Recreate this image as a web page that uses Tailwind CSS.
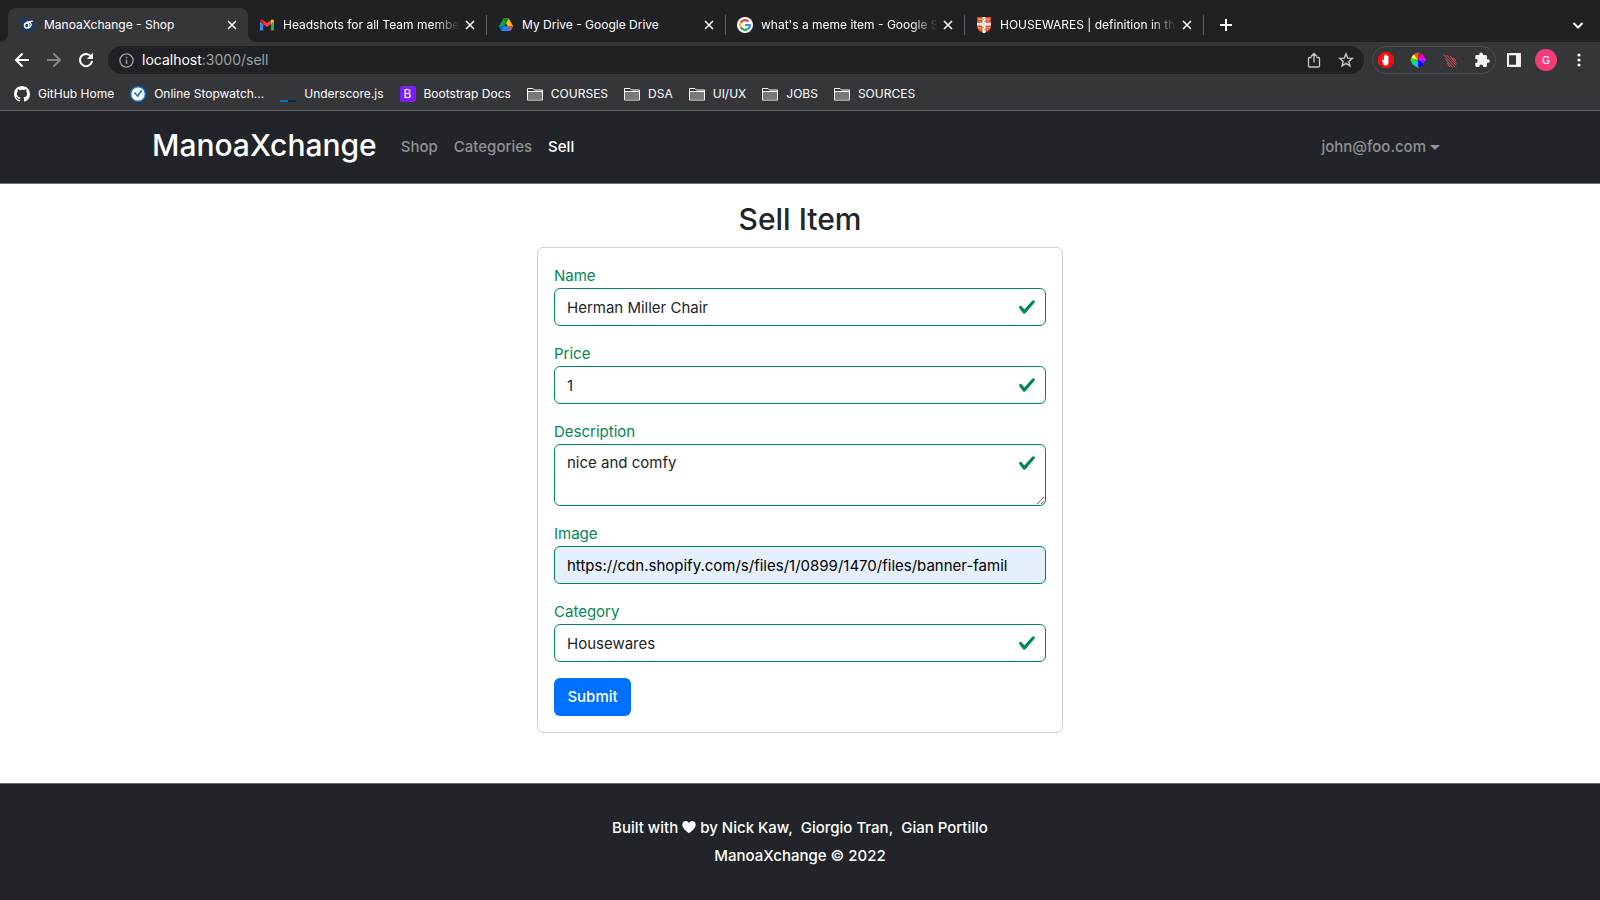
<!DOCTYPE html>
<html lang="en">
<head>
<meta charset="utf-8">
<meta name="viewport" content="width=device-width, initial-scale=1">
<title>ManoaXchange - Shop</title>
<script src="https://cdn.jsdelivr.net/npm/@tailwindcss/browser@4"></script>
</head>
<body class="flex min-h-screen flex-col bg-white font-['Inter','Liberation_Sans',sans-serif] text-[15px] leading-6 text-[#212529]">

<!-- Browser window -->
<div class="bg-[#35363a] text-xs text-white">
  <div class="flex h-[42px] items-end bg-[#202124] pr-4 pl-2" role="tablist">
    <div class="relative flex h-[34px] w-60 items-center rounded-t-lg bg-[#35363a] pr-[10px] pl-[14px]">
      <svg class="absolute bottom-0 -left-2 size-2" viewBox="0 0 8 8"><path fill="#35363a" d="M8 0v8H0a8 8 0 0 0 8-8z"/></svg>
      <svg class="absolute -right-2 bottom-0 size-2" viewBox="0 0 8 8"><path fill="#35363a" d="M0 0v8h8a8 8 0 0 1-8-8z"/></svg>
      <svg class="mr-[10px] size-3 shrink-0" viewBox="0 0 12 12"><path fill="#173a68" d="M0 0h12v12H0z"/><g fill="none" stroke="#fff"><ellipse cx="4.700" cy="6.500" rx="2.200" ry="2.400" stroke-width="1.500"/><path d="M4.500 3.200 10.800 2.200M7.500 3.500c1.800.2 2 2.200 1.300 3.500-.8 1.500-2 2-3.200 1.800" stroke-width="1.300"/></g></svg>
      <button role="tab" aria-selected="true" class="min-w-0 flex-1 overflow-hidden text-left whitespace-nowrap">ManoaXchange - Shop</button>
      <button aria-label="Close tab" class="ml-1 flex size-3 shrink-0 items-center justify-center"><svg class="size-3" viewBox="0 0 12 12" fill="none" stroke="#fff" stroke-width="1.500"><path d="m2 2 8 8m0-8-8 8"/></svg></button>
    </div>
    <div class="flex h-[34px] w-[238px] items-center pr-[10px] pl-[11px]">
      <svg class="mr-2 size-4 shrink-0" viewBox="0 0 16 16"><path fill="#4285f4" d="M1 5v7.500c0 .6.400 1 1 1h2.200V7z"/><path fill="#34a853" d="M15 5v7.500c0 .6-.4 1-1 1h-2.200V7z"/><path fill="#ea4335" d="M4.200 3.200v4L8 10l3.800-2.800v-4L8 6z"/><path fill="#c5221f" d="M1 4.600V5l3.200 2.300V3.200l-.6-.4C2.500 2 1 2.900 1 4.600z"/><path fill="#fbbc04" d="M15 4.600V5l-3.200 2.300V3.200l.6-.4C13.500 2 15 2.900 15 4.600z"/></svg>
      <button role="tab" class="min-w-0 flex-1 overflow-hidden mask-r-from-85% text-left whitespace-nowrap">Headshots for all Team member</button>
      <button aria-label="Close tab" class="ml-1 flex size-3 shrink-0 items-center justify-center"><svg class="size-3" viewBox="0 0 12 12" fill="none" stroke="#fff" stroke-width="1.500"><path d="m2 2 8 8m0-8-8 8"/></svg></button>
    </div>
    <div class="mb-[7px] h-5 w-px bg-[#5f6368]"></div>
    <div class="flex h-[34px] w-[238px] items-center pr-[10px] pl-[11px]">
      <svg class="mr-2 size-4 shrink-0" viewBox="0 0 16 16"><path fill="#0f9d58" d="M5.300 1.500 8 6.200 3.500 14 .8 9.300z"/><path fill="#ffba00" d="M5.300 1.500h5.400l4.500 7.800H9.800z"/><path fill="#2684fc" d="M5.900 9.300h9.300L12.500 14h-9z"/><path fill="#00832d" d="M5.300 1.500h5.400L8 6.200z"/><path fill="#0066da" d="M.8 9.300h5.100L3.500 14z"/><path fill="#ea4335" d="M9.800 9.300h5.400L12.500 14z"/></svg>
      <button role="tab" class="min-w-0 flex-1 overflow-hidden text-left whitespace-nowrap">My Drive - Google Drive</button>
      <button aria-label="Close tab" class="ml-1 flex size-3 shrink-0 items-center justify-center"><svg class="size-3" viewBox="0 0 12 12" fill="none" stroke="#fff" stroke-width="1.500"><path d="m2 2 8 8m0-8-8 8"/></svg></button>
    </div>
    <div class="mb-[7px] h-5 w-px bg-[#5f6368]"></div>
    <div class="flex h-[34px] w-[238px] items-center pr-[10px] pl-[11px]">
      <svg class="mr-2 size-4 shrink-0" viewBox="0 0 16 16"><circle cx="8" cy="8" r="8" fill="#fff"/><g fill="none" stroke-width="2.200"><path stroke="#ea4335" d="M3.800 5.600A4.900 4.900 0 0 1 11.500 4.600"/><path stroke="#fbbc05" d="M3.800 10.400a4.900 4.900 0 0 1 0-4.800"/><path stroke="#34a853" d="M3.800 10.400a4.900 4.900 0 0 0 7.300 1.400"/><path stroke="#4285f4" d="M8 8h4.900a4.900 4.900 0 0 1-1.800 3.800"/></g></svg>
      <button role="tab" class="min-w-0 flex-1 overflow-hidden mask-r-from-85% text-left whitespace-nowrap">what's a meme item - Google S</button>
      <button aria-label="Close tab" class="ml-1 flex size-3 shrink-0 items-center justify-center"><svg class="size-3" viewBox="0 0 12 12" fill="none" stroke="#fff" stroke-width="1.500"><path d="m2 2 8 8m0-8-8 8"/></svg></button>
    </div>
    <div class="mb-[7px] h-5 w-px bg-[#5f6368]"></div>
    <div class="flex h-[34px] w-[238px] items-center pr-[10px] pl-[11px]">
      <svg class="mr-2 size-4 shrink-0" viewBox="0 0 16 16"><path fill="#d9432f" d="M1 0h14v10c0 3-3.500 5-7 6-3.500-1-7-3-7-6z"/><path fill="#fff" d="M6.500 0h3v5.700H15v2.800H9.500v7L8 16l-1.500-.5v-7H1V5.700h5.500z"/><g fill="#f4b63f"><path d="M2 1.500h3.500V3H2zM10.500 1.500H14V3h-3.500zM2 10h3.500v1.500H2zM10.500 10H14v1.500h-3.500zM3 3.800h2v1H3zM11 3.800h2v1h-2zM4 12.500h1.500v1H4zM10.500 12.500H12v1h-1.500z"/></g><path fill="#d9432f" d="M7.500 6.500h1v1h-1z"/><path fill="#999" d="M7 2h1v1H7zM8 4h1v1H8zM3 6.500h1v1H3zM12 6.500h1v1h-1zM7 10h1v1H7zM8 12h1v1H8z"/></svg>
      <button role="tab" class="min-w-0 flex-1 overflow-hidden mask-r-from-85% text-left whitespace-nowrap">HOUSEWARES | definition in th</button>
      <button aria-label="Close tab" class="ml-1 flex size-3 shrink-0 items-center justify-center"><svg class="size-3" viewBox="0 0 12 12" fill="none" stroke="#fff" stroke-width="1.500"><path d="m2 2 8 8m0-8-8 8"/></svg></button>
    </div>
    <div class="mb-[7px] h-5 w-px bg-[#5f6368]"></div>
    <button aria-label="New tab" class="mb-[11px] ml-4 size-3"><svg class="size-3" viewBox="0 0 12 12" stroke="#fff" stroke-width="2"><path d="M6 0v12M0 6h12"/></svg></button>
    <button aria-label="Search tabs" class="mb-[11px] ml-auto size-3"><svg class="size-3" viewBox="0 0 12 12" fill="none" stroke="#fff" stroke-width="2"><path d="m1.500 4 4.500 4.500L10.500 4"/></svg></button>
  </div>

  <div class="flex h-9 items-center pr-[13px] pl-[14px]">
    <div class="flex gap-4">
      <button aria-label="Back" class="size-4"><svg class="size-4" viewBox="0 0 16 16" fill="none" stroke="#fff" stroke-width="2"><path d="M15 8H2m6.500-6.500L2 8l6.500 6.500"/></svg></button>
      <button aria-label="Forward" class="size-4"><svg class="size-4" viewBox="0 0 16 16" fill="none" stroke="#85868a" stroke-width="2"><path d="M1 8h13M7.500 1.500 14 8l-6.500 6.500"/></svg></button>
      <button aria-label="Reload" class="size-4"><svg class="size-4" viewBox="0 0 16 16" fill="none" stroke="#fff" stroke-width="2"><path d="M13.200 4.700A6.100 6.100 0 1 0 14.100 9"/><path fill="#fff" stroke="none" d="M15 .8V7H8.800z"/></svg></button>
    </div>
    <div class="ml-[14px] flex h-7 flex-1 items-center rounded-full bg-[#202124] pr-[10px] pl-[11px]">
      <svg class="mr-2 size-[15px] shrink-0" viewBox="0 0 15 15" fill="none" stroke="#9aa0a6" stroke-width="1.400"><circle cx="7.500" cy="7.500" r="6.600"/><path d="M7.500 6.500V11M7.500 3.800v1.500"/></svg>
      <div class="flex-1 text-sm text-[#9aa0a6]"><span class="text-white">localhost</span>:3000/sell</div>
      <button aria-label="Share" class="mr-4 size-4"><svg class="size-4" viewBox="0 0 16 16" fill="none" stroke="#c4c6ca" stroke-width="1.300"><path d="M5.500 5.500h-2a1 1 0 0 0-1 1V14a1 1 0 0 0 1 1h9a1 1 0 0 0 1-1V6.500a1 1 0 0 0-1-1h-2M8 10.500V1.800M5 4.500l3-3 3 3"/></svg></button>
      <button aria-label="Bookmark this page" class="size-4"><svg class="size-4" viewBox="0 0 16 16" fill="none" stroke="#c4c6ca" stroke-width="1.400"><path d="m8 1.800 1.700 4.300 4.600.3-3.500 3 1.100 4.500L8 11.400l-3.900 2.500 1.100-4.500-3.500-3 4.600-.3z"/></svg></button>
    </div>
    <div class="ml-2 flex h-7 w-[124px] items-center justify-between rounded-full border border-[#4d4e52] px-[5px]">
      <button aria-label="AdBlock" class="size-4"><svg class="size-4" viewBox="0 0 16 16"><path fill="#f40d12" d="M4.700 0h6.600L16 4.700v6.600L11.300 16H4.700L0 11.300V4.700z"/><path fill="#fff" d="M4 8.300c-.2-.7.700-1 1.100-.5l.8 1V4c0-.8 1-.8 1 0V2.800c0-.8 1.200-.8 1.200 0v.6c0-.8 1.200-.8 1.200 0v1c0-.8 1.200-.8 1.200 0v5.800c0 2-1 3.200-2.700 3.200-1.600 0-2.300-.8-2.700-2z"/></svg></button>
      <button aria-label="Color picker" class="size-4"><svg class="size-4" viewBox="0 0 16 16"><path d="M8 0 9.500 2h-3zM8 16l1.500-2h-3zM0 8l2-1.500v3zM16 8l-2-1.500v3z" fill="#aaa"/><g><path fill="#f52" d="M8 8V1a7 7 0 0 0-4 1.200z"/><path fill="#c22" d="M8 8V1a7 7 0 0 1 4 1.200z"/><path fill="#e0f" d="m8 8 4-5.800A7 7 0 0 1 15 8z"/><path fill="#72f" d="M8 8h7a7 7 0 0 1-1.500 4z"/><path fill="#00f" d="m8 8 5.500 4A7 7 0 0 1 8 15z"/><path fill="#0ce" d="M8 8v7a7 7 0 0 1-4-1.500z"/><path fill="#0e8" d="m8 8-4 5.500A7 7 0 0 1 1.400 10z"/><path fill="#2e2" d="m8 8-6.600 2A7 7 0 0 1 1.300 6z"/><path fill="#ff2" d="M8 8 1.300 6A7 7 0 0 1 4 2.200z"/></g></svg></button>
      <button aria-label="Meteor tools" class="size-4"><svg class="size-4" viewBox="0 0 16 16" fill="none" stroke="#df4f4f" stroke-width="1"><path d="m1.500 2.500 11.500 12.500M4.500 3 14.500 13.500M8 4l6.500 7.500M11 5.500l3 3.500M3 6.500l7.500 9M5 11l3 4"/></svg></button>
      <button aria-label="Extensions" class="size-4"><svg class="size-4" viewBox="0 0 24 24" fill="#f1f3f4"><path d="M21 10.700h-1.500V6.600c0-1.200-.9-2.100-2.100-2.100h-4V3a2.800 2.800 0 0 0-5.500 0v1.500H4c-1.200 0-2 .9-2 2.100v4h1.400a3 3 0 0 1 0 5.700H2v4.100C2 21.500 2.900 22.500 4 22.500h4V21a2.900 2.900 0 0 1 5.700 0v1.500h3.800c1.200 0 2-1 2-2.100v-4.100H21a2.800 2.800 0 0 0 0-5.600z"/></svg></button>
    </div>
    <button aria-label="Side panel" class="ml-[10px] size-4"><svg class="size-4" viewBox="0 0 16 16"><path fill="#f1f3f4" fill-rule="evenodd" d="M1 1h14v14H1zm2 2.200v9.600h7V3.200z"/></svg></button>
    <button aria-label="Profile" class="ml-[13px] size-[22px] rounded-full bg-[#f43b78] text-center text-[11px] leading-[22px]">G</button>
    <button aria-label="Browser menu" class="ml-[14px] size-4"><svg class="size-4" viewBox="0 0 16 16" fill="#fff"><circle cx="8" cy="3" r="1.600"/><circle cx="8" cy="8" r="1.600"/><circle cx="8" cy="13" r="1.600"/></svg></button>
  </div>

  <nav aria-label="Bookmarks" class="flex h-[33px] items-center gap-4 border-b border-[#5f6368] pl-[14px] whitespace-nowrap">
    <a href="#" class="flex items-center gap-2"><svg class="size-4" viewBox="0 0 16 16" fill="#fff"><path d="M8 0C3.580 0 0 3.580 0 8c0 3.540 2.290 6.530 5.470 7.590.4.070.55-.17.55-.38 0-.19-.01-.82-.01-1.490-2.010.37-2.530-.49-2.690-.94-.09-.23-.48-.94-.82-1.130-.28-.15-.68-.52-.01-.53.63-.01 1.080.58 1.230.82.72 1.210 1.870.87 2.330.66.07-.52.28-.87.51-1.070-1.780-.2-3.640-.89-3.640-3.950 0-.87.31-1.590.82-2.150-.08-.2-.36-1.020.08-2.120 0 0 .67-.21 2.200.82.64-.18 1.320-.27 2-.27s1.360.09 2 .27c1.530-1.040 2.200-.82 2.200-.82.44 1.100.16 1.920.08 2.120.51.56.82 1.270.82 2.150 0 3.070-1.870 3.750-3.650 3.950.29.25.54.73.54 1.480 0 1.070-.01 1.930-.01 2.200 0 .21.15.46.55.38A8.010 8.010 0 0 0 16 8c0-4.420-3.580-8-8-8z"/></svg>GitHub Home</a>
    <a href="#" class="flex items-center gap-2"><svg class="size-4" viewBox="0 0 16 16"><circle cx="8" cy="8" r="7.300" fill="#fff" stroke="#1677cf" stroke-width="1.400"/><path d="m4.500 6.500 3.200 3.700 4-6" fill="none" stroke="#1677cf" stroke-width="1.700"/></svg>Online Stopwatch...</a>
    <a href="#" class="flex items-center gap-2"><svg class="size-4" viewBox="0 0 16 16"><path fill="#0371b5" d="M0 14h8v2H0z"/><path fill="#022c46" d="M8 14h8v2H8z"/></svg>Underscore.js</a>
    <a href="#" class="flex items-center gap-2"><span class="size-4 rounded-xs bg-[#7a1ff5] text-center text-xs leading-4">B</span>Bootstrap Docs</a>
    <a href="#" class="flex items-center gap-2"><svg class="size-4" viewBox="0 0 16 16"><path d="M.5 14V2.500h5.500L7.500 4h8V14z" fill="none" stroke="#fff"/><path d="M1 6h14v7.500H1z" fill="#77787b"/><path d="M1 5.500h14" stroke="#fff"/></svg>COURSES</a>
    <a href="#" class="flex items-center gap-2"><svg class="size-4" viewBox="0 0 16 16"><path d="M.5 14V2.500h5.500L7.500 4h8V14z" fill="none" stroke="#fff"/><path d="M1 6h14v7.500H1z" fill="#77787b"/><path d="M1 5.500h14" stroke="#fff"/></svg>DSA</a>
    <a href="#" class="flex items-center gap-2"><svg class="size-4" viewBox="0 0 16 16"><path d="M.5 14V2.500h5.500L7.500 4h8V14z" fill="none" stroke="#fff"/><path d="M1 6h14v7.500H1z" fill="#77787b"/><path d="M1 5.500h14" stroke="#fff"/></svg>UI/UX</a>
    <a href="#" class="flex items-center gap-2"><svg class="size-4" viewBox="0 0 16 16"><path d="M.5 14V2.500h5.500L7.500 4h8V14z" fill="none" stroke="#fff"/><path d="M1 6h14v7.500H1z" fill="#77787b"/><path d="M1 5.500h14" stroke="#fff"/></svg>JOBS</a>
    <a href="#" class="flex items-center gap-2"><svg class="size-4" viewBox="0 0 16 16"><path d="M.5 14V2.500h5.500L7.500 4h8V14z" fill="none" stroke="#fff"/><path d="M1 6h14v7.500H1z" fill="#77787b"/><path d="M1 5.500h14" stroke="#fff"/></svg>SOURCES</a>
  </nav>
</div>

<!-- Site header -->
<header class="border-b border-[#6c7074] bg-[#212529]">
  <nav class="mx-auto flex h-[72px] max-w-[1320px] items-center px-3 font-medium text-[#909294]">
    <a href="#" class="mr-6 pb-1 text-[30px] leading-[38px] text-white">ManoaXchange</a>
    <div class="flex gap-4">
      <a href="#">Shop</a>
      <a href="#">Categories</a>
      <a href="#" class="text-white">Sell</a>
    </div>
    <button class="mr-2 ml-auto flex items-center gap-1">john@foo.com<svg class="h-[5px] w-[10px]" viewBox="0 0 10 5" fill="currentColor"><path d="M0 0h10L5 5z"/></svg></button>
  </nav>
</header>

<main class="mx-auto w-full max-w-[526px] flex-1 pt-4 pb-[50px]">
  <h2 class="mb-2 text-center text-[30px] leading-[39px] font-medium">Sell Item</h2>
  <form class="flex flex-col gap-4 rounded-md border border-[#d2d2d2] p-4">
    <div>
      <label for="name" class="block text-[#008758]">Name</label>
      <div class="relative">
        <input id="name" type="text" value="Herman Miller Chair" class="block h-[38px] w-full rounded-md border border-[#008758] pr-9 pl-3">
        <svg class="absolute top-[10px] right-[10px] size-[18px]" viewBox="0 0 8 8" fill="#008758"><path d="M2.300 6.730.6 4.530c-.4-1.040.46-1.400 1.100-.8l1.100 1.400 3.400-3.800c.6-.63 1.600-.27 1.200.7l-4 4.600c-.43.5-.8.4-1.100.1z"/></svg>
      </div>
    </div>
    <div>
      <label for="price" class="block text-[#008758]">Price</label>
      <div class="relative">
        <input id="price" type="text" value="1" class="block h-[38px] w-full rounded-md border border-[#008758] pr-9 pl-3">
        <svg class="absolute top-[10px] right-[10px] size-[18px]" viewBox="0 0 8 8" fill="#008758"><path d="M2.300 6.730.6 4.530c-.4-1.040.46-1.400 1.100-.8l1.100 1.400 3.400-3.800c.6-.63 1.600-.27 1.200.7l-4 4.600c-.43.5-.8.4-1.100.1z"/></svg>
      </div>
    </div>
    <div>
      <label for="description" class="block text-[#008758]">Description</label>
      <div class="relative">
        <textarea id="description" class="block h-[62px] w-full resize-y rounded-md border border-[#008758] py-[6px] pr-9 pl-3">nice and comfy</textarea>
        <svg class="absolute top-[10px] right-[10px] size-[18px]" viewBox="0 0 8 8" fill="#008758"><path d="M2.300 6.730.6 4.530c-.4-1.040.46-1.400 1.100-.8l1.100 1.400 3.400-3.800c.6-.63 1.600-.27 1.200.7l-4 4.600c-.43.5-.8.4-1.100.1z"/></svg>
      </div>
    </div>
    <div>
      <label for="image" class="block text-[#008758]">Image</label>
      <input id="image" type="text" value="https://cdn.shopify.com/s/files/1/0899/1470/files/banner-famil" class="block h-[38px] w-full rounded-md border border-[#008758] bg-[#e6f0fd] pr-9 pl-3 text-black">
    </div>
    <div>
      <label for="category" class="block text-[#008758]">Category</label>
      <div class="relative">
        <input id="category" type="text" value="Housewares" class="block h-[38px] w-full rounded-md border border-[#008758] pr-9 pl-3">
        <svg class="absolute top-[10px] right-[10px] size-[18px]" viewBox="0 0 8 8" fill="#008758"><path d="M2.300 6.730.6 4.530c-.4-1.040.46-1.400 1.100-.8l1.100 1.400 3.400-3.800c.6-.63 1.600-.27 1.200.7l-4 4.600c-.43.5-.8.4-1.100.1z"/></svg>
      </div>
    </div>
    <button type="submit" class="h-[38px] min-w-[77px] self-start rounded-md bg-[#0071ff] px-3 font-medium text-white">Submit</button>
  </form>
</main>

<footer class="border-t border-[#6c7074] bg-[#212529] py-[30px] text-center leading-7 font-medium text-white">
  <p>Built with <svg class="inline size-[14px] align-[-1px]" viewBox="0 0 14 14" fill="#fff"><path d="M7 13.300C3.500 10.800.3 8 .3 4.600.3 2.500 1.800.9 3.700.9 5.100.9 6.400 1.700 7 3 7.600 1.700 8.900.9 10.300.9c1.900 0 3.400 1.600 3.400 3.700 0 3.400-3.200 6.200-6.700 8.700z"/></svg> by Nick Kaw,&nbsp; Giorgio Tran,&nbsp; Gian Portillo</p>
  <p>ManoaXchange © 2022</p>
</footer>
</body>
</html>
